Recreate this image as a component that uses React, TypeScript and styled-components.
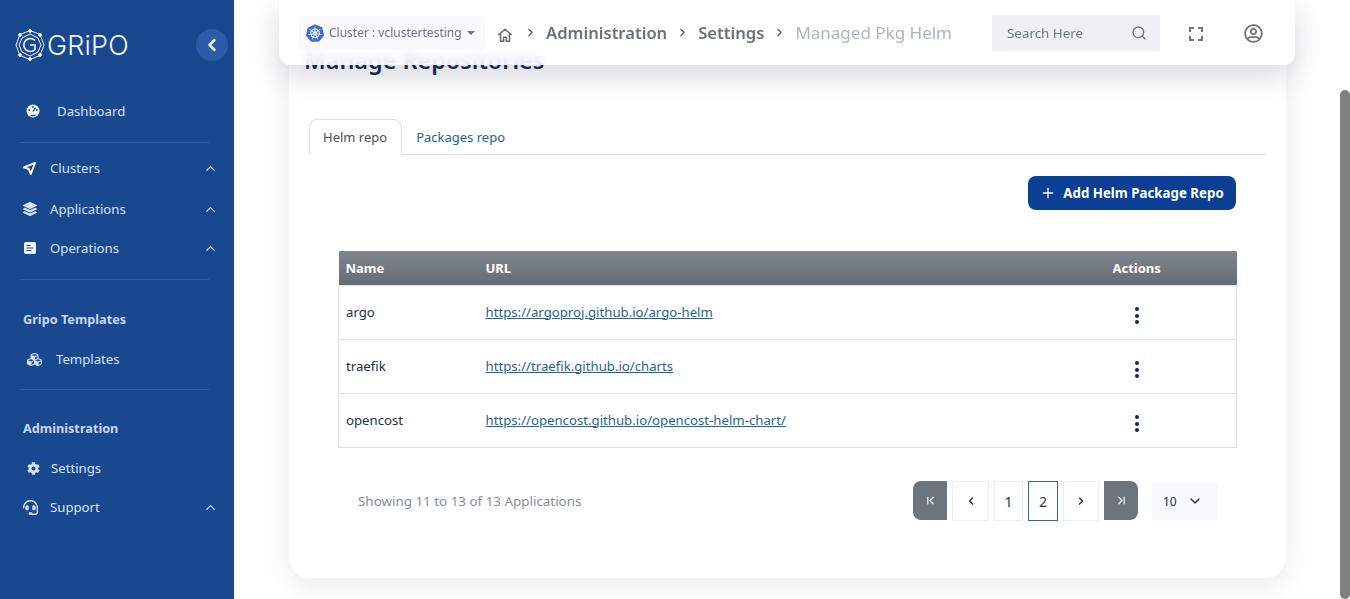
import { createGlobalStyle, styled } from "styled-components"
import { ChevronDown, ChevronFirst, ChevronLast, ChevronLeft, ChevronRight, ChevronUp, Plus, Search } from "lucide-react"
import { FaCog, FaCubes, FaHeadset, FaLayerGroup, FaRegUserCircle } from "react-icons/fa"
import { SiKubernetes } from "react-icons/si"

const GlobalStyle = createGlobalStyle`
    html, body {
        margin: 0;
        height: 100%;
        overflow: hidden;
        background: #fff;
        font-family: "Noto Sans", "Open Sans", sans-serif;
    }
`

const Page = styled.div`
    position: relative;
    display: flex;
    width: 1350px;
    height: 599px;
    overflow: hidden;
`

const Sidebar = styled.aside`
    width: 234px;
    flex: none;
    background: #19488f;
    color: #d5e3fa;
    display: flex;
    flex-direction: column;
`

const LogoRow = styled.div`
    height: 90px;
    display: flex;
    align-items: center;
    padding: 0 6px 0 15px;
    box-sizing: border-box;
`

const LogoText = styled.span`
    font-family: "Inter", sans-serif;
    font-weight: 300;
    font-size: 27px;
    letter-spacing: 0.2px;
    color: #f2f6fd;
    margin-left: 2px;
    flex: 1;
`

const Collapse = styled.button`
    width: 32px;
    height: 32px;
    border: 0;
    padding: 0;
    border-radius: 50%;
    background: #2c5ca8;
    color: #e6eefb;
    display: flex;
    align-items: center;
    justify-content: center;
`

const NavItem = styled.div<{ $top: number; $icon: number; $gap: number }>`
    display: flex;
    align-items: center;
    height: 20px;
    margin-top: ${(p) => p.$top}px;
    padding-left: ${(p) => p.$icon}px;
    padding-right: 16px;
    gap: ${(p) => p.$gap}px;
    font-size: 13.2px;
`

const NavLabel = styled.span`
    flex: 1;
`

const Divider = styled.div<{ $top: number }>`
    height: 1px;
    margin: ${(p) => p.$top}px 25px 0 20px;
    background: #2f5da3;
`

const SectionTitle = styled.div<{ $top: number }>`
    margin: ${(p) => p.$top}px 0 0 23px;
    height: 20px;
    line-height: 20px;
    font-size: 12.7px;
    font-weight: 700;
    color: #c6d7f3;
`

const Main = styled.main`
    flex: 1;
    min-width: 0;
    display: flex;
    flex-direction: column;
    justify-content: flex-end;
    padding: 0 54px 21px 55px;
    overflow: hidden;
`

const Card = styled.section`
    flex: none;
    background: #fff;
    border-radius: 20px;
    padding: 0 20px 57px;
    box-shadow: 0 8px 30px rgba(30, 40, 60, 0.09);
`

const Title = styled.h1`
    margin: 0 0 41px -5px;
    font-size: 23.4px;
    line-height: 36px;
    font-weight: 600;
    color: #0d2c5e;
`

const Tabs = styled.div`
    display: flex;
    height: 36px;
    box-sizing: border-box;
    border-bottom: 1px solid #dee2e6;
`

const Tab = styled.div<{ $active?: boolean }>`
    height: 36px;
    box-sizing: border-box;
    padding: 1px 14px 0 13px;
    display: flex;
    align-items: center;
    font-size: 13px;
    color: ${(p) => (p.$active ? "#495057" : "#1f6391")};
    background: ${(p) => (p.$active ? "#fff" : "transparent")};
    border: 1px solid ${(p) => (p.$active ? "#dee2e6" : "transparent")};
    border-bottom-color: ${(p) => (p.$active ? "#fff" : "transparent")};
    border-radius: 8px 8px 0 0;
`

const Actions = styled.div`
    display: flex;
    justify-content: flex-end;
    margin: 21px 30px 41px 0;
`

const AddButton = styled.button`
    height: 34px;
    width: 208px;
    border: 0;
    border-radius: 8px;
    background: #0a3f94;
    color: #fff;
    font-family: inherit;
    font-size: 13.3px;
    font-weight: 700;
    display: flex;
    align-items: center;
    justify-content: center;
    gap: 7px;
`

const Table = styled.table`
    width: 899px;
    margin: 0 0 0 29px;
    border-collapse: collapse;
    table-layout: fixed;
    font-size: 13.2px;
    color: #20303f;
`

const HeadCell = styled.th<{ $width?: number }>`
    height: 35px;
    box-sizing: border-box;
    padding: 0 7px;
    text-align: left;
    color: #fff;
    font-weight: 700;
    font-size: 13px;
    background: linear-gradient(#80868d, #646c74);
    width: ${(p) => (p.$width ? `${p.$width}px` : "auto")};
`

const Cell = styled.td`
    height: 54px;
    padding: 0 7px 2px;
    box-sizing: border-box;
    border: solid #dee2e6;
    border-width: 1px 0;
    &:first-child { border-left-width: 1px; }
    &:last-child { border-right-width: 1px; }
`

const RepoLink = styled.a`
    color: #1f6391;
    text-decoration: underline;
`

const Kebab = styled.div`
    display: flex;
    flex-direction: column;
    align-items: center;
    gap: 2.5px;
    width: 48px;
    margin-top: 8px;
`

const Dot = styled.span`
    width: 4px;
    height: 4px;
    border-radius: 50%;
    background: #0f2a4a;
`

const Footer = styled.div`
    display: flex;
    align-items: center;
    margin: 33px 48px 0 49px;
    height: 40px;
`

const Showing = styled.span`
    flex: 1;
    font-size: 13.4px;
    color: #868e96;
`

const Pager = styled.div`
    display: flex;
    gap: 5px;
    margin-right: 14px;
`

const PageButton = styled.div<{ $width: number; $active?: boolean }>`
    width: ${(p) => p.$width}px;
    height: 40px;
    box-sizing: border-box;
    display: flex;
    align-items: center;
    justify-content: center;
    font-size: 14px;
    color: #2a3642;
    background: #fff;
    border: 1px solid ${(p) => (p.$active ? "#2e6a80" : "#eceeef")};
`

const EdgeButton = styled.div<{ $side: "left" | "right" }>`
    width: 34px;
    height: 39px;
    display: flex;
    align-items: center;
    justify-content: center;
    color: #e3e6e8;
    background: #6c757d;
    border-radius: ${(p) => (p.$side === "left" ? "8px 0 0 8px" : "0 8px 8px 0")};
`

const PerPage = styled.div`
    width: 66px;
    height: 39px;
    box-sizing: border-box;
    padding: 0 15px 0 11px;
    display: flex;
    align-items: center;
    justify-content: space-between;
    border-radius: 4px;
    background: #f8f9fa;
    font-size: 12px;
    color: #20303f;
`

const ScrollTrack = styled.div`
    width: 10px;
    flex: none;
    padding-top: 90px;
    box-sizing: border-box;
`

const ScrollThumb = styled.div`
    height: 100%;
    background: #808080;
    border-radius: 5px;
`

const TopBar = styled.header`
    position: absolute;
    top: 0;
    left: 279px;
    width: 1016px;
    height: 65px;
    box-sizing: border-box;
    padding: 0 32px 0 20px;
    display: flex;
    align-items: center;
    border-radius: 0 0 12px 12px;
    background: rgba(255, 255, 255, 0.86);
    backdrop-filter: blur(4px);
    box-shadow: 0 10px 30px rgba(30, 40, 60, 0.18);
`

const ClusterChip = styled.div`
    width: 186px;
    height: 34px;
    box-sizing: border-box;
    padding-left: 7px;
    display: flex;
    align-items: center;
    gap: 5px;
    border-radius: 4px;
    background: #f8f9fa;
    font-size: 12px;
    white-space: nowrap;
    color: #6c757d;
`

const Caret = styled.span`
    width: 0;
    height: 0;
    border: 4px solid transparent;
    border-top-color: #6c757d;
    border-bottom-width: 0;
`

const Crumbs = styled.nav`
    display: flex;
    align-items: center;
    margin-left: 12px;
    flex: 1;
    font-size: 16.6px;
    font-weight: 600;
    white-space: nowrap;
    color: #6b7177;
`

const CrumbSep = styled(ChevronRight)`
    margin: 0 9px;
    color: #495057;
`

const HomeSlot = styled.span`
    display: flex;
    margin-top: 5px;
    margin-right: 2px;
`

const CrumbLast = styled.span`
    font-weight: 400;
    font-size: 17px;
    color: #adb5bd;
`

const SearchBox = styled.div`
    width: 168px;
    height: 36px;
    box-sizing: border-box;
    padding: 0 13px 0 15px;
    display: flex;
    align-items: center;
    justify-content: space-between;
    background: #eef0f6;
    font-size: 13.4px;
    color: #6c757d;
`

const IconSlot = styled.div<{ $left: number }>`
    margin: 2px 0 0 ${(p) => p.$left}px;
    display: flex;
    color: #6f7479;
`

function GripoMark() {
    return (
        <svg width="30" height="32" viewBox="0 0 30 32" fill="none" stroke="#f2f6fd">
            <polygon points="15,1.5 25,5.5 29,16 25,26.5 15,30.5 5,26.5 1,16 5,5.5" strokeWidth="1" />
            <polygon points="15,5 23,9 26,16 23,23 15,27 7,23 4,16 7,9" strokeWidth="1" />
            <path d="M20 11.5a6.5 6.5 0 1 0 0 9v-4.5h-5" strokeWidth="1.6" />
            <circle cx="15" cy="2" r="1.4" fill="#f2f6fd" />
            <circle cx="25" cy="6" r="1.4" fill="#f2f6fd" />
            <circle cx="25" cy="26" r="1.4" fill="#f2f6fd" />
            <circle cx="15" cy="30" r="1.4" fill="#f2f6fd" />
            <circle cx="5" cy="26" r="1.4" fill="#f2f6fd" />
            <circle cx="5" cy="6" r="1.4" fill="#f2f6fd" />
        </svg>
    )
}

function DashboardIcon() {
    return (
        <svg width="14" height="14" viewBox="0 0 14 14">
            <circle cx="7" cy="7" r="6.5" fill="#f2f6fd" />
            <path d="M7 7.5 9.5 3.5" stroke="#19488f" strokeWidth="1.4" />
            <circle cx="7" cy="3" r="0.9" fill="#19488f" />
            <circle cx="3.2" cy="6" r="0.9" fill="#19488f" />
            <circle cx="10.8" cy="6" r="0.9" fill="#19488f" />
            <path d="M4.5 11.5h5" stroke="#19488f" strokeWidth="1.4" />
        </svg>
    )
}

function ClustersIcon() {
    return (
        <svg width="15" height="15" viewBox="0 0 15 15" fill="none" stroke="#f2f6fd" strokeWidth="2" strokeLinejoin="round">
            <path d="M13 2 1.8 6.4l5 1.6 2 5z" />
        </svg>
    )
}

function OperationsIcon() {
    return (
        <svg width="14" height="14" viewBox="0 0 14 14">
            <rect x="1" y="1" width="12" height="12" rx="2" fill="#f2f6fd" />
            <path d="M3.5 4.5h4M3.5 7h7M3.5 9.5h5" stroke="#19488f" strokeWidth="1.2" />
        </svg>
    )
}

function HomeIcon() {
    return (
        <svg width="16" height="16" viewBox="0 0 18 18" fill="none" stroke="#63696f" strokeWidth="1.7" strokeLinejoin="round">
            <path d="M1.5 9 9 2.5 16.5 9M4 7.5V16h3.5v-4.5h3V16H14V7.5" />
        </svg>
    )
}

function FullscreenIcon() {
    return (
        <svg width="14" height="14" viewBox="0 0 14 14" fill="none" stroke="#6f7479" strokeWidth="2">
            <path d="M1 5V1h4M9 1h4v4M13 9v4H9M5 13H1V9" />
        </svg>
    )
}

const repos = [
    { name: "argo", url: "https://argoproj.github.io/argo-helm" },
    { name: "traefik", url: "https://traefik.github.io/charts" },
    { name: "opencost", url: "https://opencost.github.io/opencost-helm-chart/" },
]

function App() {
    return (
        <Page>
            <GlobalStyle />
            <Sidebar>
                <LogoRow>
                    <GripoMark />
                    <LogoText>GRiPO</LogoText>
                    <Collapse>
                        <ChevronLeft size={20} strokeWidth={3} />
                    </Collapse>
                </LogoRow>
                <NavItem $top={11} $icon={26} $gap={17}>
                    <DashboardIcon />
                    <NavLabel>Dashboard</NavLabel>
                </NavItem>
                <Divider $top={21} />
                <NavItem $top={15} $icon={22} $gap={13}>
                    <ClustersIcon />
                    <NavLabel>Clusters</NavLabel>
                    <ChevronUp size={15} />
                </NavItem>
                <NavItem $top={21} $icon={23} $gap={13}>
                    <FaLayerGroup size={14} />
                    <NavLabel>Applications</NavLabel>
                    <ChevronUp size={15} />
                </NavItem>
                <NavItem $top={19} $icon={23} $gap={13}>
                    <OperationsIcon />
                    <NavLabel>Operations</NavLabel>
                    <ChevronUp size={15} />
                </NavItem>
                <Divider $top={21} />
                <SectionTitle $top={29}>Gripo Templates</SectionTitle>
                <NavItem $top={20} $icon={27} $gap={14}>
                    <FaCubes size={15} />
                    <NavLabel>Templates</NavLabel>
                </NavItem>
                <Divider $top={20} />
                <SectionTitle $top={28}>Administration</SectionTitle>
                <NavItem $top={20} $icon={27} $gap={11}>
                    <FaCog size={13} />
                    <NavLabel>Settings</NavLabel>
                </NavItem>
                <NavItem $top={19} $icon={23} $gap={12}>
                    <FaHeadset size={15} />
                    <NavLabel>Support</NavLabel>
                    <ChevronUp size={15} />
                </NavItem>
            </Sidebar>
            <Main>
                <Card>
                    <Title>Manage Repositories</Title>
                    <Tabs>
                        <Tab $active>Helm repo</Tab>
                        <Tab>Packages repo</Tab>
                    </Tabs>
                    <Actions>
                        <AddButton>
                            <Plus size={16} />
                            Add Helm Package Repo
                        </AddButton>
                    </Actions>
                    <Table>
                        <thead>
                            <tr>
                                <HeadCell $width={140}>Name</HeadCell>
                                <HeadCell>URL</HeadCell>
                                <HeadCell $width={131}>Actions</HeadCell>
                            </tr>
                        </thead>
                        <tbody>
                            {repos.map((repo) => (
                                <tr key={repo.name}>
                                    <Cell>{repo.name}</Cell>
                                    <Cell>
                                        <RepoLink href="#">{repo.url}</RepoLink>
                                    </Cell>
                                    <Cell>
                                        <Kebab>
                                            <Dot />
                                            <Dot />
                                            <Dot />
                                        </Kebab>
                                    </Cell>
                                </tr>
                            ))}
                        </tbody>
                    </Table>
                    <Footer>
                        <Showing>Showing 11 to 13 of 13 Applications</Showing>
                        <Pager>
                            <EdgeButton $side="left">
                                <ChevronFirst size={13} strokeWidth={2.5} />
                            </EdgeButton>
                            <PageButton $width={37}>
                                <ChevronLeft size={12} strokeWidth={3} />
                            </PageButton>
                            <PageButton $width={29}>1</PageButton>
                            <PageButton $width={30} $active>
                                2
                            </PageButton>
                            <PageButton $width={36}>
                                <ChevronRight size={12} strokeWidth={3} />
                            </PageButton>
                            <EdgeButton $side="right">
                                <ChevronLast size={13} strokeWidth={2.5} />
                            </EdgeButton>
                        </Pager>
                        <PerPage>
                            10
                            <ChevronDown size={16} />
                        </PerPage>
                    </Footer>
                </Card>
            </Main>
            <ScrollTrack>
                <ScrollThumb />
            </ScrollTrack>
            <TopBar>
                <ClusterChip>
                    <SiKubernetes size={18} color="#3f6fc4" />
                    Cluster : vclustertesting
                    <Caret />
                </ClusterChip>
                <Crumbs>
                    <HomeSlot>
                        <HomeIcon />
                    </HomeSlot>
                    <CrumbSep size={13} />
                    Administration
                    <CrumbSep size={13} />
                    Settings
                    <CrumbSep size={13} />
                    <CrumbLast>Managed Pkg Helm</CrumbLast>
                </Crumbs>
                <SearchBox>
                    Search Here
                    <Search size={16} />
                </SearchBox>
                <IconSlot $left={29}>
                    <FullscreenIcon />
                </IconSlot>
                <IconSlot $left={41}>
                    <FaRegUserCircle size={19} />
                </IconSlot>
            </TopBar>
        </Page>
    )
}

export default App
